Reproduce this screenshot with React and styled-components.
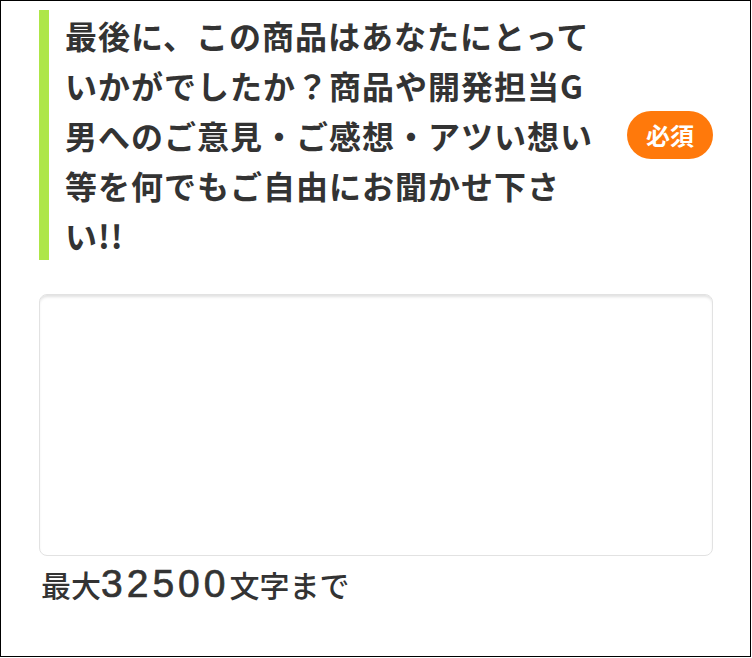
import React from "react";
import styled, { createGlobalStyle } from "styled-components";

const GlobalStyle = createGlobalStyle`
  html, body {
    margin: 0;
    padding: 0;
    background: #ffffff;
  }
  body {
    font-family: "Noto Sans CJK JP", "Noto Sans", sans-serif;
    color: #333333;
  }
`;

const Frame = styled.div`
  width: 751px;
  height: 657px;
  box-sizing: border-box;
  border: 1px solid #000000;
  background: #ffffff;
  padding: 9px 37px 0 38px;
  display: flex;
  flex-direction: column;
`;

const QuestionRow = styled.div`
  display: flex;
  align-items: center;
  justify-content: space-between;
`;

const Question = styled.h2`
  margin: 0;
  box-sizing: content-box;
  width: 536px;
  border-left: 10px solid #aee648;
  padding-left: 16px;
  font-family: "Noto Sans CJK JP", "Noto Sans", sans-serif;
  font-size: 32px;
  font-weight: 700;
  line-height: 50px;
  letter-spacing: 1px;
  color: #333333;
`;

const Badge = styled.span`
  flex: none;
  display: inline-flex;
  align-items: center;
  justify-content: center;
  width: 86px;
  height: 48px;
  border-radius: 24px;
  background: #ff790b;
  color: #ffffff;
  font-family: "Noto Sans CJK JP", "Noto Sans", sans-serif;
  font-size: 24px;
  font-weight: 700;
  line-height: 1;
`;

const Answer = styled.textarea`
  display: block;
  margin: 34px 0 0;
  width: 100%;
  height: 262px;
  box-sizing: border-box;
  border: 1px solid #e2e2e2;
  border-radius: 8px;
  box-shadow: inset 0 3px 3px -1px rgba(0, 0, 0, 0.12);
  background: #ffffff;
  padding: 10px 12px;
  resize: none;
  outline: none;
  font-family: "Noto Sans CJK JP", "Noto Sans", sans-serif;
  font-size: 24px;
  color: #333333;
`;

const Note = styled.p`
  margin: 5px 0 0 2px;
  font-family: "Noto Sans CJK JP", "Noto Sans", sans-serif;
  font-size: 30px;
  font-weight: 500;
  line-height: 45px;
  color: #333333;
`;

const Digits = styled.span`
  font-family: "Liberation Sans", Arial, sans-serif;
  font-size: 39px;
  font-weight: 400;
  letter-spacing: 4px;
  -webkit-text-stroke: 0.7px #333333;
`;

export default function App() {
  return (
    <>
      <GlobalStyle />
      <Frame>
        <QuestionRow>
          <Question>
            最後に、この商品はあなたにとっていかがでしたか？商品や開発担当G男へのご意見・ご感想・アツい想い等を何でもご自由にお聞かせ下さい!!
          </Question>
          <Badge>必須</Badge>
        </QuestionRow>
        <Answer aria-label="ご意見・ご感想" />
        <Note>
          最大<Digits>32500</Digits>文字まで
        </Note>
      </Frame>
    </>
  );
}
